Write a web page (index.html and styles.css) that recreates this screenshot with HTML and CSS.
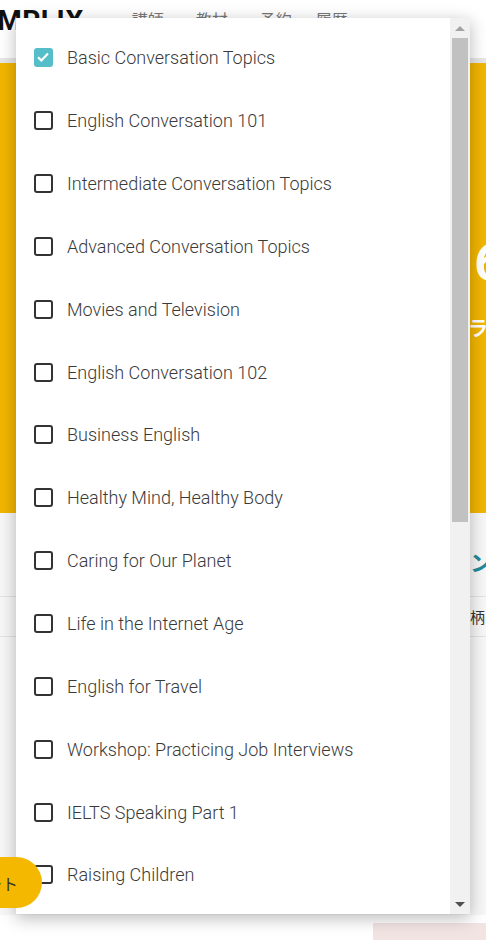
FILE: index.html
```html
<!DOCTYPE html>
<html lang="ja">
<head>
    <meta charset="UTF-8">
    <meta name="viewport" content="width=device-width, initial-scale=1.0">
    <title>トピック選択</title>
    <link rel="stylesheet" href="styles.css">
</head>
<body>

    <header class="site-header">
        <div class="logo">AMPLIX</div>
        <nav class="main-nav">
            <a href="#">講師</a>
            <a href="#">教材</a>
            <a href="#">予約</a>
            <a href="#">履歴</a>
        </nav>
    </header>

    <section class="hero">
        <div class="hero-text">
            <p class="hero-big">6</p>
            <p class="hero-sub">ラム</p>
        </div>
    </section>

    <section class="course-info">
        <h2 class="course-title">ン</h2>
        <div class="info-row">柄</div>
    </section>

    <div class="footer-strip">
        <div class="footer-pink"></div>
    </div>

    <!-- topic filter dropdown -->
    <div class="topic-menu">
        <ul class="topic-list">
            <li><label class="topic"><span class="box checked"><svg viewBox="0 0 18 18" width="18" height="18"><path d="M4 9.2l3.3 3.2L14 5.6" fill="none" stroke="#fff" stroke-width="2.2"/></svg></span>Basic Conversation Topics</label></li>
            <li><label class="topic"><span class="box"></span>English Conversation 101</label></li>
            <li><label class="topic"><span class="box"></span>Intermediate Conversation Topics</label></li>
            <li><label class="topic"><span class="box"></span>Advanced Conversation Topics</label></li>
            <li><label class="topic"><span class="box"></span>Movies and Television</label></li>
            <li><label class="topic"><span class="box"></span>English Conversation 102</label></li>
            <li><label class="topic"><span class="box"></span>Business English</label></li>
            <li><label class="topic"><span class="box"></span>Healthy Mind, Healthy Body</label></li>
            <li><label class="topic"><span class="box"></span>Caring for Our Planet</label></li>
            <li><label class="topic"><span class="box"></span>Life in the Internet Age</label></li>
            <li><label class="topic"><span class="box"></span>English for Travel</label></li>
            <li><label class="topic"><span class="box"></span>Workshop: Practicing Job Interviews</label></li>
            <li><label class="topic"><span class="box"></span>IELTS Speaking Part 1</label></li>
            <li><label class="topic"><span class="box"></span>Raising Children</label></li>
            <li><label class="topic"><span class="box"></span>IELTS Speaking Part 2</label></li>
            <li><label class="topic"><span class="box"></span>IELTS Speaking Part 3</label></li>
            <li><label class="topic"><span class="box"></span>Food and Cooking</label></li>
            <li><label class="topic"><span class="box"></span>Sports and Hobbies</label></li>
        </ul>
        <div class="scrollbar">
            <span class="arrow up"></span>
            <div class="track"><div class="thumb"></div></div>
            <span class="arrow down"></span>
        </div>
    </div>

    <button class="support-btn">ート</button>

</body>
</html>
```

FILE: styles.css
```css
/* styles.css */
body {
    margin: 0;
    width: 486px;
    height: 940px;
    overflow: hidden;
    font-family: Roboto, "Noto Sans CJK JP", sans-serif;
    background-color: #f7f7f7;
    color: #333;
}

/* --- page behind the menu --- */
.site-header {
    height: 58px;
    background-color: #fff;
    border-bottom: 5px solid #e6e6e6;
    display: flex;
    align-items: flex-start;
    white-space: nowrap;
}

.logo {
    margin-left: -22px;
    margin-top: 4px;
    font-size: 28px;
    font-weight: 700;
    letter-spacing: 0.5px;
    color: #111;
}

.main-nav {
    display: flex;
    gap: 32px;
    margin-left: 48px;
    margin-top: 7px;
}

.main-nav a {
    font-size: 16px;
    color: #777;
    text-decoration: none;
}

.main-nav a:last-child {
    margin-left: -8px;
}

.hero {
    height: 450px;
    background-color: #f2b600;
    overflow: hidden;
}

.hero-text {
    margin-left: 474px;
    padding-top: 170px;
    white-space: nowrap;
    color: #fff;
    font-weight: 700;
}

.hero-big {
    margin: 0;
    font-size: 52px;
    line-height: 60px;
}

.hero-sub {
    margin: 20px 0 0 -6px;
    font-size: 20px;
}

.course-info {
    height: 402px;
    padding-top: 32px;
    box-sizing: border-box;
    white-space: nowrap;
    overflow: hidden;
}

.course-title {
    margin: 0 0 19px 470px;
    font-size: 22px;
    color: #1f8a9c;
}

.info-row {
    border-top: 1px solid #e2e2e2;
    border-bottom: 1px solid #e2e2e2;
    padding: 9px 0 9px 470px;
    font-size: 15px;
    color: #333;
}

.footer-strip {
    display: flex;
    justify-content: flex-end;
    height: 26px;
    background-color: #fff;
}

.footer-pink {
    width: 113px;
    margin-top: 8px;
    background-color: #f3e4e4;
}

/* --- dropdown --- */
.topic-menu {
    position: absolute;
    left: 16px;
    top: 18px;
    width: 454px;
    height: 896px;
    background-color: #fff;
    box-shadow: 0 4px 16px rgba(0, 0, 0, 0.28);
    display: flex;
    overflow: hidden;
    z-index: 10;
}

.topic-list {
    flex: 1;
    list-style: none;
    margin: 0;
    padding: 8.5px 0;
    overflow: hidden;
}

.topic {
    display: flex;
    align-items: center;
    height: 62.85px;
    padding-left: 18px;
    gap: 14px;
    font-size: 18px;
    font-weight: 300;
    color: #3a3a3a;
    white-space: nowrap;
    cursor: pointer;
}

.box {
    flex: none;
    width: 19px;
    height: 19px;
    box-sizing: border-box;
    border: 2px solid #333;
    border-radius: 3px;
}

.box.checked {
    background-color: #56bec8;
    border-color: #56bec8;
    display: flex;
}

.box.checked svg {
    margin: -2px;
}

/* fake scrollbar */
.scrollbar {
    flex: none;
    width: 20px;
    background-color: #f1f1f1;
    display: flex;
    flex-direction: column;
}

.arrow {
    height: 20px;
    display: flex;
    align-items: center;
    justify-content: center;
}

.arrow::before {
    content: "";
    border-left: 5px solid transparent;
    border-right: 5px solid transparent;
}

.arrow.up::before {
    border-bottom: 5px solid #a3a3a3;
}

.arrow.down::before {
    border-top: 5px solid #505050;
}

.track {
    flex: 1;
    padding: 0 2px;
}

.thumb {
    height: 484px;
    background-color: #c1c1c1;
}

/* --- floating support button --- */
.support-btn {
    position: absolute;
    left: -60px;
    top: 857px;
    width: 102px;
    height: 51px;
    border: none;
    border-radius: 26px;
    background-color: #f5b800;
    color: #333;
    font-family: "Noto Sans CJK JP", sans-serif;
    font-size: 16px;
    text-align: right;
    padding: 0 24px 0 0;
    z-index: 20;
}
```
